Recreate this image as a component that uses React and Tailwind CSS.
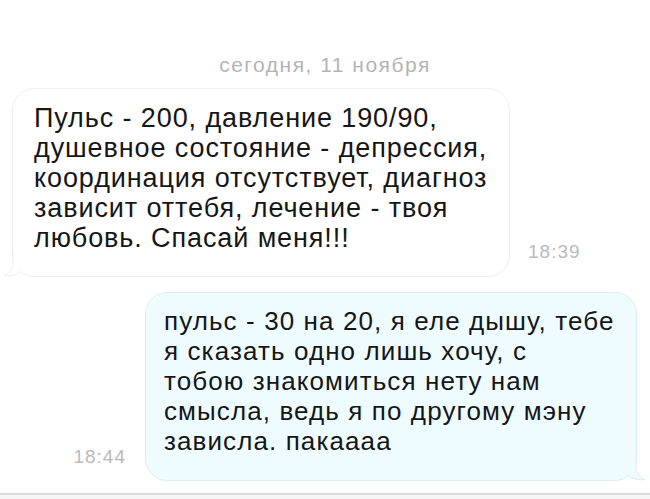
import React from "react";

const INCOMING = [
  "Пульс - 200, давление 190/90,",
  "душевное состояние - депрессия,",
  "координация отсутствует, диагноз",
  "зависит оттебя, лечение - твоя",
  "любовь. Спасай меня!!!",
];

const OUTGOING = [
  "пульс - 30 на 20, я еле дышу, тебе",
  "я сказать одно лишь хочу, с",
  "тобою знакомиться нету нам",
  "смысла, ведь я по другому мэну",
  "зависла. пакаааа",
];

function Lines({ lines }) {
  return lines.map((l, i) => (
    <div key={i} className="whitespace-nowrap">
      {l}
    </div>
  ));
}

export default function App() {
  return (
    <div className="w-[650px] h-[499px] bg-white overflow-hidden flex flex-col font-['Liberation_Sans',Arial,sans-serif] text-[#161616]">
      <div className="h-[88px] pt-[53px] text-center text-[21px] leading-[24px] tracking-[1.5px] text-[#b4b4b4]">
        сегодня, 11 ноября
      </div>

      <div className="flex items-end pl-[12px]">
        <div className="relative w-[498px] h-[189px] rounded-[22px] border border-[#eeeeee] bg-white pl-[21px] pt-[14px] text-[27px] leading-[30px] tracking-[0.9px]">
          <Lines lines={INCOMING} />
          <svg
            className="absolute left-[-11px] bottom-[-1px]"
            width="30"
            height="24"
            viewBox="0 0 30 24"
          >
            <path d="M11 0 L11 10 C11 16 7 20 2 22.5 C8 23.5 15 22 20 18 L30 23 L30 0 Z" fill="#ffffff" />
            <path d="M11 0 L11 10 C11 16 7 20 2 22.5 C8 23.5 15 22 20 18" fill="none" stroke="#eeeeee" strokeWidth="1" />
          </svg>
        </div>
        <div className="ml-[18px] mb-[15px] text-[19px] leading-[20px] tracking-[1px] text-[#bababa]">18:39</div>
      </div>

      <div className="mt-[15px] flex items-end justify-end pr-[13px]">
        <div className="mr-[19px] mb-[14px] text-[19px] leading-[20px] tracking-[1px] text-[#bababa]">18:44</div>
        <div className="relative w-[492px] h-[189px] rounded-[22px] border border-[#deedf1] bg-[#effcff] pl-[18px] pt-[13px] text-[26px] leading-[30px] tracking-[1.1px]">
          <Lines lines={OUTGOING} />
          <svg
            className="absolute right-[-11px] bottom-[-1px]"
            width="30"
            height="24"
            viewBox="0 0 30 24"
          >
            <path d="M19 0 L19 10 C19 16 23 20 28 22.5 C22 23.5 15 22 10 18 L0 23 L0 0 Z" fill="#effcff" />
            <path d="M19 0 L19 10 C19 16 23 20 28 22.5 C22 23.5 15 22 10 18" fill="none" stroke="#deedf1" strokeWidth="1" />
          </svg>
        </div>
      </div>

      <div className="mt-auto h-[6px] border-t-2 border-[#dadada] bg-[#f6f6f6]" />
    </div>
  );
}
